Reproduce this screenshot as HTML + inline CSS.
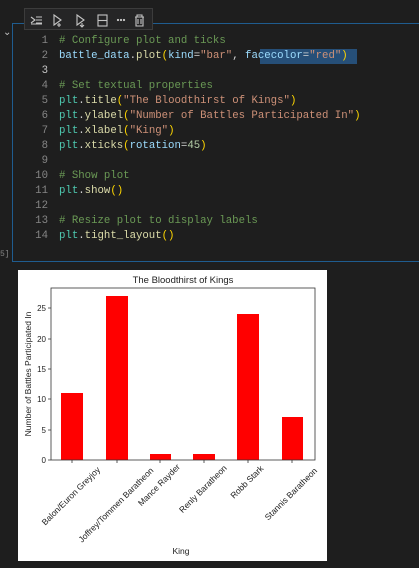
<!DOCTYPE html>
<html><head><meta charset="utf-8"><style>
body{margin:0;width:419px;height:568px;background:#1e1e1e;overflow:hidden;position:relative;font-family:"Liberation Mono",monospace}
.cell{position:absolute;left:12px;top:23px;width:410px;height:239px;border:1px solid #1f5c8f;box-sizing:border-box}
.tb{position:absolute;left:24px;top:8px;width:129px;height:22px;background:#252526;border:1px solid #3c3c3c;box-sizing:border-box;z-index:2}
.ln{position:absolute;left:26px;width:22px;text-align:right;color:#858585;font-size:10.7px}
.code{position:absolute;left:59px;font-size:10.7px;white-space:pre;color:#d4d4d4}
.c{color:#6a9955}.v{color:#9cdcfe}.f{color:#dcdcaa}.s{color:#ce9178}.p{color:#ffd700}.n{color:#b5cea8}.m{color:#4ec9b0}
.sel{position:absolute;left:260px;top:49px;width:97px;height:15px;background:#264f78}
</style></head><body>
<div class="cell"></div>
<div class="tb">
<svg width="129" height="22" viewBox="0 0 129 22" fill="none" stroke="#c5c5c5" stroke-width="1.1">
<path d="M6 8l4 3-4 3M11 8h6M11 11h6M11 14h6M6 15h11"/>
<path d="M29 6v10l7-5z M34 14v4M32 16h4"/>
<path d="M52 6v10l7-5z M57 14v4M55 16l2 2 2-2"/>
<rect x="73" y="6" width="9" height="11"/><path d="M73 11.5h9"/>
<circle cx="93" cy="11" r=".6"/><circle cx="96" cy="11" r=".6"/><circle cx="99" cy="11" r=".6"/>
<path d="M110 8h9M112 8V6h5v2M111 8v9h7V8M113 10v5M116 10v5"/>
</svg></div>
<div style="position:absolute;left:3px;top:27px;color:#c5c5c5;font-size:10px">⌄</div>
<div style="position:absolute;left:0;top:250px;color:#858585;font-size:8px">5]</div>
<div class="sel"></div>
<div style="position:absolute;left:0;top:2px;width:419px;height:240px">
<div class="ln" style="top:33px">1</div><div class="code" style="top:33px"><span class="c"># Configure plot and ticks</span></div>
<div class="ln" style="top:48px">2</div><div class="code" style="top:48px"><span class="v">battle_data</span>.<span class="f">plot</span><span class="p">(</span><span class="v">kind</span>=<span class="s">"bar"</span>, <span class="v">facecolor</span>=<span class="s">"red"</span><span class="p">)</span></div>
<div class="ln" style="top:63px;color:#c6c6c6">3</div>
<div class="ln" style="top:78px">4</div><div class="code" style="top:78px"><span class="c"># Set textual properties</span></div>
<div class="ln" style="top:93px">5</div><div class="code" style="top:93px"><span class="m">plt</span>.<span class="f">title</span><span class="p">(</span><span class="s">"The Bloodthirst of Kings"</span><span class="p">)</span></div>
<div class="ln" style="top:108px">6</div><div class="code" style="top:108px"><span class="m">plt</span>.<span class="f">ylabel</span><span class="p">(</span><span class="s">"Number of Battles Participated In"</span><span class="p">)</span></div>
<div class="ln" style="top:123px">7</div><div class="code" style="top:123px"><span class="m">plt</span>.<span class="f">xlabel</span><span class="p">(</span><span class="s">"King"</span><span class="p">)</span></div>
<div class="ln" style="top:138px">8</div><div class="code" style="top:138px"><span class="m">plt</span>.<span class="f">xticks</span><span class="p">(</span><span class="v">rotation</span>=<span class="n">45</span><span class="p">)</span></div>
<div class="ln" style="top:153px">9</div>
<div class="ln" style="top:168px">10</div><div class="code" style="top:168px"><span class="c"># Show plot</span></div>
<div class="ln" style="top:183px">11</div><div class="code" style="top:183px"><span class="m">plt</span>.<span class="f">show</span><span class="p">()</span></div>
<div class="ln" style="top:198px">12</div>
<div class="ln" style="top:213px">13</div><div class="code" style="top:213px"><span class="c"># Resize plot to display labels</span></div>
<div class="ln" style="top:228px">14</div><div class="code" style="top:228px"><span class="m">plt</span>.<span class="f">tight_layout</span><span class="p">()</span></div>
</div>

<svg style="position:absolute;left:18px;top:270px" width="309" height="291" viewBox="18 270 309 291" font-family="Liberation Sans, sans-serif" font-size="8.5" fill="#222">
<rect x="18" y="270" width="309" height="291" fill="#fff"/>
<text x="183" y="283" text-anchor="middle" font-size="9.5">The Bloodthirst of Kings</text>
<g fill="#f00">
<rect x="61" y="393" width="22" height="67"/>
<rect x="106" y="296" width="22" height="164"/>
<rect x="150" y="454" width="21" height="6"/>
<rect x="193" y="454" width="22" height="6"/>
<rect x="237" y="314" width="22" height="146"/>
<rect x="282" y="417" width="21" height="43"/>
</g>
<rect x="51" y="288" width="264" height="172" fill="none" stroke="#333" stroke-width="0.8"/>
<g stroke="#333" stroke-width="0.8">
<path d="M48 460h3M48 430h3M48 399h3M48 369h3M48 339h3M48 308h3"/>
<path d="M72 460v3M117 460v3M160 460v3M204 460v3M248 460v3M292 460v3"/>
</g>
<g text-anchor="end" font-size="8">
<text x="46" y="463">0</text><text x="46" y="433">5</text><text x="46" y="402">10</text><text x="46" y="372">15</text><text x="46" y="342">20</text><text x="46" y="311">25</text>
</g>
<text transform="translate(31 374) rotate(-90)" text-anchor="middle">Number of Battles Participated In</text>
<g text-anchor="middle">
<text transform="translate(73 498) rotate(-45)">Balon/Euron Greyjoy</text>
<text transform="translate(118 507) rotate(-45)">Joffrey/Tommen Baratheon</text>
<text transform="translate(161 487) rotate(-45)">Mance Rayder</text>
<text transform="translate(205 491) rotate(-45)">Renly Baratheon</text>
<text transform="translate(249 484) rotate(-45)">Robb Stark</text>
<text transform="translate(293 496) rotate(-45)">Stannis Baratheon</text>
</g>
<text x="181" y="554" text-anchor="middle">King</text>
</svg>
</body></html>
